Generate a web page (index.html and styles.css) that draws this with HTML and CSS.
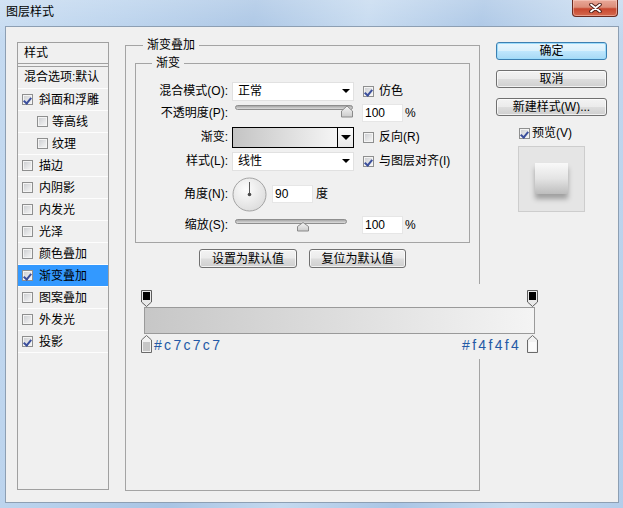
FILE: index.html
```html
<!DOCTYPE html>
<html lang="zh-CN">
<head>
<meta charset="utf-8">
<title>图层样式</title>
<link rel="stylesheet" href="styles.css">
</head>
<body>
<div class="window">
  <div class="titlebar">
    <span class="title">图层样式</span>
    <div class="close">
      <svg width="13" height="10" viewBox="0 0 13 10"><path d="M2 1.5 L11 8.5 M11 1.5 L2 8.5" stroke="#4a1c16" stroke-width="3.6" stroke-linecap="round"/><path d="M2 1.5 L11 8.5 M11 1.5 L2 8.5" stroke="#ffffff" stroke-width="1.8" stroke-linecap="round"/></svg>
    </div>
  </div>
  <div class="client">
    <div class="panel">
      <div class="panel-head">样式</div>
      <div class="panel-blend">混合选项:默认</div>
      <ul class="fx-list">
        <li class="fx"><span class="cb on"></span>斜面和浮雕</li>
        <li class="fx sub"><span class="cb"></span>等高线</li>
        <li class="fx sub"><span class="cb"></span>纹理</li>
        <li class="fx"><span class="cb"></span>描边</li>
        <li class="fx"><span class="cb"></span>内阴影</li>
        <li class="fx"><span class="cb"></span>内发光</li>
        <li class="fx"><span class="cb"></span>光泽</li>
        <li class="fx"><span class="cb"></span>颜色叠加</li>
        <li class="fx active"><span class="cb on"></span>渐变叠加</li>
        <li class="fx"><span class="cb"></span>图案叠加</li>
        <li class="fx"><span class="cb"></span>外发光</li>
        <li class="fx"><span class="cb on"></span>投影</li>
      </ul>
    </div>

    <fieldset class="group outer">
      <legend>渐变叠加</legend>
      <fieldset class="group inner">
        <legend>渐变</legend>
        <div class="form">
          <div class="lbl">混合模式(O):</div>
          <div class="combo"><span>正常</span><span class="arrow"></span></div>
          <div class="check"><span class="cb on"></span>仿色</div>

          <div class="lbl">不透明度(P):</div>
          <div class="ctl">
            <svg class="slider s-op" width="119" height="13" viewBox="0 0 119 13">
              <defs>
                <linearGradient id="trk" x1="0" y1="0" x2="0" y2="1"><stop offset="0" stop-color="#9d9d9d"/><stop offset="1" stop-color="#e6e6e6"/></linearGradient>
                <linearGradient id="thm" x1="0" y1="0" x2="0" y2="1"><stop offset="0" stop-color="#f6f6f6"/><stop offset="1" stop-color="#cbcbcb"/></linearGradient>
              </defs>
              <rect x="0.5" y="0.5" width="117" height="4" rx="2" fill="url(#trk)" stroke="#8e8e8e"/>
              <path d="M112 1 L117.5 6 V12 H106.5 V6 Z" fill="url(#thm)" stroke="#8a8a8a" stroke-linejoin="round"/>
            </svg>
          </div>
          <div class="numwrap"><span class="num">100</span><span class="unit">%</span></div>

          <div class="lbl">渐变:</div>
          <div class="swatch"><span class="swatch-fill"></span><span class="swatch-btn"><span class="arrow big"></span></span></div>
          <div class="check"><span class="cb"></span>反向(R)</div>

          <div class="lbl">样式(L):</div>
          <div class="combo"><span>线性</span><span class="arrow"></span></div>
          <div class="check"><span class="cb on"></span>与图层对齐(I)</div>

          <div class="lbl">角度(N):</div>
          <div class="angle">
            <svg class="dial" width="35" height="35" viewBox="0 0 35 35">
              <defs>
                <radialGradient id="dialg" cx="0.4" cy="0.35" r="0.7"><stop offset="0" stop-color="#fdfdfd"/><stop offset="1" stop-color="#dcdcdc"/></radialGradient>
              </defs>
              <circle cx="17.5" cy="17.5" r="16.5" fill="url(#dialg)" stroke="#a3a3a3"/>
              <line x1="17.5" y1="17.5" x2="17.5" y2="5" stroke="#5a5a5a" stroke-width="1"/>
              <circle cx="17.5" cy="17.5" r="1.8" fill="#4a4a4a"/>
            </svg>
            <span class="num">90</span><span class="unit deg">度</span>
          </div>
          <div></div>

          <div class="lbl">缩放(S):</div>
          <div class="ctl">
            <svg class="slider s-sc" width="113" height="13" viewBox="0 0 113 13">
              <rect x="0.5" y="0.5" width="111" height="4" rx="2" fill="url(#trk)" stroke="#8e8e8e"/>
              <path d="M68 3.5 L73.5 7.5 V12 H62.5 V7.5 Z" fill="url(#thm)" stroke="#8a8a8a" stroke-linejoin="round"/>
            </svg>
          </div>
          <div class="numwrap"><span class="num">100</span><span class="unit">%</span></div>
        </div>
      </fieldset>

      <div class="defaults">
        <button class="btn b-set">设置为默认值</button>
        <button class="btn b-reset">复位为默认值</button>
      </div>

      <div class="grad-editor">
        <div class="stops-top">
          <svg width="11" height="17" viewBox="0 0 11 17"><path d="M0.5 0.5 H10.5 V12 L5.5 16.5 L0.5 12 Z" fill="#e9e9e9" stroke="#5c5c5c"/><rect x="2" y="2" width="7" height="8" fill="#000"/></svg>
          <svg width="11" height="17" viewBox="0 0 11 17"><path d="M0.5 0.5 H10.5 V12 L5.5 16.5 L0.5 12 Z" fill="#e9e9e9" stroke="#5c5c5c"/><rect x="2" y="2" width="7" height="8" fill="#000"/></svg>
        </div>
        <div class="bar"></div>
        <div class="stops-bottom">
          <div class="stop-group">
            <svg width="11" height="18" viewBox="0 0 11 18"><path d="M5.5 0.5 L10.5 5 V17.5 H0.5 V5 Z" fill="#f2f2f2" stroke="#6a6a6a"/><rect x="2" y="7" width="7" height="9" fill="#c7c7c7"/></svg>
            <span class="hex">#c7c7c7</span>
          </div>
          <div class="stop-group">
            <span class="hex">#f4f4f4</span>
            <svg class="stop-r" width="11" height="18" viewBox="0 0 11 18"><path d="M5.5 0.5 L10.5 5 V17.5 H0.5 V5 Z" fill="#f2f2f2" stroke="#6a6a6a"/><rect x="2" y="7" width="7" height="9" fill="#fbfbfb"/></svg>
          </div>
        </div>
      </div>
    </fieldset>

    <div class="side">
      <button class="btn primary">确定</button>
      <button class="btn">取消</button>
      <button class="btn">新建样式(W)...</button>
      <div class="check preview-check"><span class="cb on"></span>预览(V)</div>
      <div class="preview"><div class="preview-swatch"></div></div>
    </div>
  </div>
</div>
</body>
</html>
```

FILE: styles.css
```css
* { box-sizing: border-box; }
html, body { margin: 0; padding: 0; }
body {
  width: 623px;
  height: 508px;
  overflow: hidden;
  font-family: "Liberation Sans", "Noto Sans CJK SC", sans-serif;
  font-size: 12px;
  line-height: 14px;
  color: #000;
  background: #a9c6e4;
}

.window {
  width: 623px;
  height: 508px;
  display: flex;
  flex-direction: column;
  background:
    linear-gradient(180deg, rgba(255,255,255,0.22), rgba(255,255,255,0) 40px),
    linear-gradient(100deg, #c6dbf1 0%, #b8d1ec 18%, #a8c4e4 36%, #c4d9ef 52%, #a9c5e5 68%, #c7dbf0 84%, #b3cdea 100%);
}

.titlebar {
  height: 26px;
  display: flex;
  justify-content: space-between;
  align-items: flex-start;
  padding: 0 5px 0 6px;
}
.title { margin-top: 5px; line-height: 14px; }
.close {
  width: 46px;
  height: 17px;
  border: 1px solid #6a2a20;
  border-top: none;
  border-radius: 0 0 4px 4px;
  background: linear-gradient(#e9a898 0%, #dc8e7a 45%, #c8472f 55%, #d46a4f 100%);
  box-shadow: inset 0 0 0 1px rgba(255,220,210,0.45);
  display: flex;
  align-items: center;
  justify-content: center;
}

.client {
  flex: 1;
  margin: 0 4px 5px 5px;
  border: 1px solid #8d9fb3;
  background: #f0f0f0;
  display: grid;
  grid-template-columns: 92px 355px 111px;
  column-gap: 16px;
  align-items: start;
  padding: 11px 10px 0 11px;
}

/* left style list */
.panel {
  margin-top: 4px;
  height: 448px;
  border: 1px solid #a0a0a0;
  display: flex;
  flex-direction: column;
}
.panel-head {
  height: 21px;
  line-height: 20px;
  padding-left: 6px;
  border-bottom: 1px solid #a0a0a0;
}
.panel-blend {
  margin-top: 2px;
  height: 23px;
  line-height: 21px;
  padding-left: 6px;
  border-top: 1px solid #a0a0a0;
  border-bottom: 1px solid #fdfdfd;
}
.fx-list { list-style: none; margin: 0; padding: 0; }
.fx {
  height: 22px;
  display: flex;
  align-items: center;
  padding-left: 4px;
  border-bottom: 1px solid #fdfdfd;
}
.fx .cb { margin-right: 6px; }
.fx.sub { padding-left: 19px; }
.fx.sub .cb { margin-right: 4px; }
.fx.active { background: #3399ff; }

.cb {
  position: relative;
  width: 11px;
  height: 11px;
  flex: none;
  border: 1px solid #8e8f8f;
  background: linear-gradient(135deg, #c9cbcf 0%, #e6e7e8 60%, #f7f7f7 100%);
  box-shadow: inset 0 0 0 1px #f4f4f4;
}
.cb.on::after {
  content: "";
  position: absolute;
  left: 2px;
  top: 1px;
  width: 3px;
  height: 6px;
  border-right: 2px solid #3b4f9c;
  border-bottom: 2px solid #3b4f9c;
  transform: rotate(40deg);
}

/* group boxes */
.group {
  margin: 0;
  padding: 0;
  min-width: 0;
  border: 1px solid #a4a4a4;
}
.group > legend {
  padding: 0 4px;
  height: 14px;
  line-height: 14px;
}
.outer { height: 453px; }
.outer > legend { margin-left: 17px; }
.inner { margin: 4px 9px 0; }
.inner > legend { margin-left: 16px; }

.form {
  display: grid;
  grid-template-columns: 96px 131px 1fr;
  grid-template-rows: 22px 22px 26px 22px 44px 18px;
  align-items: center;
  padding: 10px 0 8px;
}
.lbl { text-align: right; padding-right: 4px; }
.ctl { display: flex; }

.combo {
  width: 122px;
  height: 19px;
  background: #fff;
  border: 1px solid #e1e1e1;
  display: flex;
  align-items: center;
  justify-content: space-between;
  padding: 0 3px 0 5px;
}
.arrow {
  width: 0;
  height: 0;
  border-left: 4px solid transparent;
  border-right: 4px solid transparent;
  border-top: 4px solid #000;
}
.arrow.big {
  border-left-width: 5px;
  border-right-width: 5px;
  border-top-width: 5px;
}

.check { display: flex; align-items: center; }
.check .cb { margin-right: 5px; }

.slider { display: block; margin-left: 3px; }
.s-op { margin-top: -4px; }
.s-sc { margin-top: 1px; }

.numwrap { display: flex; align-items: center; margin-left: -1px; }
.num {
  width: 41px;
  height: 18px;
  line-height: 16px;
  background: #fff;
  border: 1px solid #e6e6e6;
  padding-left: 2px;
}
.unit { margin-left: 2px; }
.unit.deg { margin-left: 3px; }

.swatch {
  width: 122px;
  height: 21px;
  border: 1px solid #000;
  display: flex;
}
.swatch-fill {
  flex: 1;
  background: linear-gradient(to right, #c4c4c4, #f5f5f5);
}
.swatch-btn {
  width: 16px;
  border-left: 1px solid #000;
  background: linear-gradient(#fbfbfb, #e8e8e8);
  display: flex;
  align-items: center;
  justify-content: center;
}

.angle { display: flex; align-items: center; }
.dial { display: block; margin-right: 5px; }

/* buttons */
.btn {
  height: 19px;
  padding: 0;
  border: 1px solid #707070;
  border-radius: 3px;
  background: linear-gradient(#f3f3f3 0%, #ebebeb 48%, #dddddd 52%, #cfcfcf 100%);
  box-shadow: inset 0 0 0 1px rgba(255,255,255,0.7);
  font-family: "Liberation Sans", "Noto Sans CJK SC", sans-serif;
  font-size: 12px;
  line-height: 16px;
  color: #000;
}
.defaults {
  display: flex;
  justify-content: center;
  gap: 12px;
  margin-top: 6px;
}
.b-set { width: 98px; }
.b-reset { width: 97px; }

/* gradient editor */
.grad-editor {
  width: 398px;
  margin: 16px 0 0 15px;
  padding: 6px 0;
  background: #f0f0f0;
}
.stops-top {
  height: 17px;
  display: flex;
  justify-content: space-between;
  padding-right: 1px;
}
.stops-top svg, .stops-bottom svg { display: block; }
.bar {
  height: 27px;
  margin: 0 4px 0 3px;
  border: 1px solid #9a9a9a;
  background: linear-gradient(to right, #c7c7c7, #f4f4f4);
}
.stops-bottom {
  height: 18px;
  margin-top: 1px;
  display: flex;
  justify-content: space-between;
  padding-right: 1px;
}
.stop-group { display: flex; align-items: center; }
.hex {
  font-family: "Liberation Sans", sans-serif;
  font-size: 14px;
  line-height: 16px;
  letter-spacing: 2.3px;
  color: #2459a6;
  margin-left: 2px;
  margin-top: 2px;
}
.stop-r { margin-left: 6px; }

/* right side */
.side {
  margin-top: 4px;
  display: flex;
  flex-direction: column;
}
.side .btn {
  width: 111px;
  height: 18px;
  margin-bottom: 10px;
}
.side .btn:nth-of-type(3) { margin-bottom: 0; }
.btn.primary {
  border-color: #3c7fb1;
  background: linear-gradient(#eaf6fd 0%, #d9f0fc 48%, #bee6fd 52%, #a7d9f5 100%);
  box-shadow: inset 0 0 0 1px #9ddcfb;
}
.preview-check {
  height: 14px;
  margin: 10px 0 0 23px;
}
.preview-check .cb { margin-right: 2px; }
.preview {
  margin: 6px 0 0 22px;
  width: 67px;
  height: 66px;
  border: 1px solid #cdcdcd;
  background: #e5e5e5;
  display: flex;
  justify-content: center;
  padding-top: 16px;
}
.preview-swatch {
  width: 33px;
  height: 31px;
  background: linear-gradient(#f9f9f9 0%, #e4e4e4 50%, #bdbdbd 100%);
  box-shadow: 0 5px 5px rgba(0,0,0,0.3);
}
```
